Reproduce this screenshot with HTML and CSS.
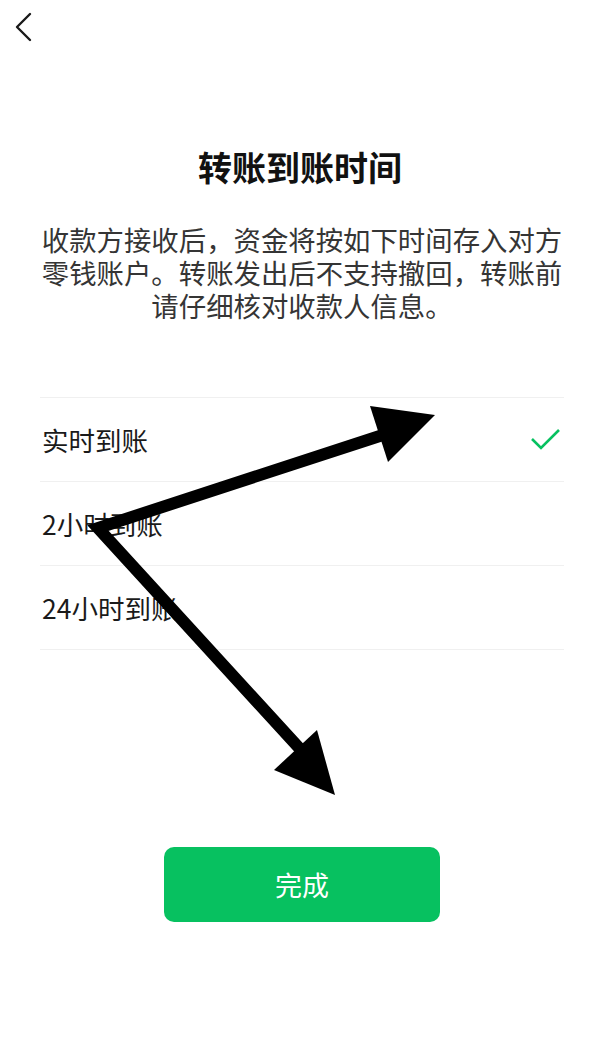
FILE: index.html
```html
<!DOCTYPE html>
<html lang="zh-CN">
<head>
    <meta charset="UTF-8">
    <meta name="viewport" content="width=device-width, initial-scale=1.0">
    <title>转账到账时间</title>
    <link rel="stylesheet" href="styles.css">
</head>
<body>
    <div class="page">
        <!-- 顶部返回 -->
        <div class="header">
            <svg class="back" width="24" height="32" viewBox="0 0 24 32">
                <polyline points="18,4 5,17 18,30" fill="none" stroke="#1a1a1a" stroke-width="2.4" stroke-linecap="round" stroke-linejoin="round"/>
            </svg>
        </div>

        <h1 class="title">转账到账时间</h1>
        <p class="desc">收款方接收后，资金将按如下时间存入对方零钱账户。转账发出后不支持撤回，转账前请仔细核对收款人信息。</p>

        <ul class="options">
            <li class="option selected">
                <span>实时到账</span>
                <svg class="check" width="32" height="26" viewBox="0 0 32 26">
                    <polyline points="2,12 11,21 29,3" fill="none" stroke="#07c160" stroke-width="2.6" stroke-linejoin="miter"/>
                </svg>
            </li>
            <li class="option"><span>2小时到账</span></li>
            <li class="option"><span>24小时到账</span></li>
        </ul>

        <button class="done">完成</button>

        <!-- 标注箭头 -->
        <svg class="marks" width="612" height="1041" viewBox="0 0 612 1041">
            <polyline points="392,432 98,528 312,762" fill="none" stroke="#000" stroke-width="12" stroke-linejoin="miter"/>
            <polygon points="370,406 435,415 388,462" fill="#000"/>
            <polygon points="317,730 335,795 274,770" fill="#000"/>
        </svg>
    </div>
</body>
</html>
```

FILE: styles.css
```css
* {
    box-sizing: border-box;
}
body {
    margin: 0;
    background-color: #fff;
    font-family: "Noto Sans CJK SC", "Noto Sans", sans-serif;
    color: #1a1a1a;
}
.page {
    position: relative;
    width: 612px;
    height: 1041px;
    overflow: hidden;
}

/* 头部 */
.header {
    height: 52px;
    padding: 10px 0 0 12px;
}
.back {
    display: block;
}

.title {
    margin: 92px 0 0;
    padding-right: 12px;
    text-align: center;
    font-size: 34px;
    line-height: 46px;
    font-weight: 700;
    color: #111;
}
.desc {
    margin: 33px 0 0;
    padding: 0 49px 0 41px;
    text-align: center;
    font-size: 27.4px;
    line-height: 33px;
    color: #353535;
}

/* 到账时间选项 */
.options {
    list-style: none;
    margin: 75px 48px 0 40px;
    padding: 0;
    border-top: 1px solid #f0f0f0;
}
.option {
    display: flex;
    align-items: center;
    justify-content: space-between;
    height: 84px;
    padding: 0 2px 0 2px;
    border-bottom: 1px solid #f0f0f0;
    font-size: 26.5px;
}
.check {
    display: block;
}

.done {
    display: block;
    width: 276px;
    height: 75px;
    margin: 197px 0 0 164px;
    border: none;
    border-radius: 10px;
    background-color: #07c160;
    color: #fff;
    font-family: inherit;
    font-size: 27px;
}

.marks {
    position: absolute;
    top: 0;
    left: 0;
    pointer-events: none;
}
```
